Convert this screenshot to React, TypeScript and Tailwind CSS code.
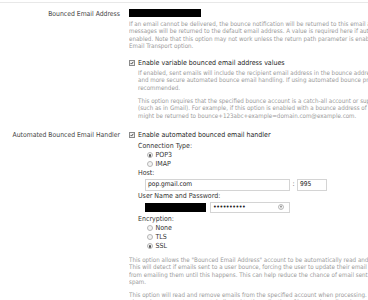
import React from "react";

const desc = "text-[6.2px] leading-[7.3px] text-[#9a9a9a]";

function Check() {
  return (
    <span className="mt-[1px] flex h-[6px] w-[6px] shrink-0 items-center justify-center border border-[#8a8a8a] bg-[#f2f2f2]">
      <svg viewBox="0 0 6 6" className="h-[6px] w-[6px]">
        <path d="M1 3.2 L2.4 4.6 L5 1.2" fill="none" stroke="#222" strokeWidth="1.2" />
      </svg>
    </span>
  );
}

function Radio({ on, label }: { on?: boolean; label: string }) {
  return (
    <div className="flex h-[9px] items-center gap-[2.5px] pl-[9px]">
      <span className="flex h-[6px] w-[6px] items-center justify-center rounded-full border border-[#b5b5b5] bg-[#f4f4f4]">
        {on && <span className="h-[2.5px] w-[2.5px] rounded-full bg-[#555]" />}
      </span>
      <span className="text-[7px] text-[#333]">{label}</span>
    </div>
  );
}

export default function App() {
  return (
    <div className="h-[300px] w-[368px] overflow-hidden bg-white font-['DejaVu_Sans_Condensed','DejaVu_Sans',sans-serif]">
      <div className="h-[3px] border-b border-[#e8e8e8]" />
      <div className="grid grid-cols-[120px_1fr] gap-x-[9px] overflow-hidden pt-[6px]">
        {/* Bounced Email Address */}
        <div className="pt-[1px] text-right text-[6.8px] leading-[9px] text-[#444]">Bounced Email Address</div>
        <div className="min-w-0 overflow-hidden">
          <div className="h-[8px] w-[72px] bg-black" />
          <div className={`${desc} mt-[3px] whitespace-nowrap`}>
            <div>If an email cannot be delivered, the bounce notification will be returned to this email address.</div>
            <div>messages will be returned to the default email address. A value is required here if automated</div>
            <div>enabled. Note that this option may not work unless the return path parameter is enabled</div>
            <div>Email Transport option.</div>
          </div>
          <div className="mt-[10px] flex items-start gap-[3px]">
            <Check />
            <span className="text-[7px] leading-[9px] text-[#222]">Enable variable bounced email address values</span>
          </div>
          <div className={`${desc} ml-[9px] mt-[1px] whitespace-nowrap`}>
            <div>If enabled, sent emails will include the recipient email address in the bounce address.</div>
            <div>and more secure automated bounce email handling. If using automated bounce processing,</div>
            <div>recommended.</div>
            <div className="h-[6px]" />
            <div>This option requires that the specified bounce account is a catch-all account or supports</div>
            <div>(such as in Gmail). For example, if this option is enabled with a bounce address of bounce@</div>
            <div>might be returned to bounce+123abc+example=domain.com@example.com.</div>
          </div>
        </div>

        {/* Automated Bounced Email Handler */}
        <div className="pt-[12px] text-right text-[6.8px] leading-[9px] text-[#444]">Automated Bounced Email Handler</div>
        <div className="min-w-0 overflow-hidden pt-[12px]">
          <div className="flex items-start gap-[3px]">
            <Check />
            <span className="text-[7px] leading-[9px] text-[#222]">Enable automated bounced email handler</span>
          </div>
          <div className="ml-[9px] text-[7px] leading-[9px] text-[#333]">
            <div className="mt-[2px]">Connection Type:</div>
            <Radio on label="POP3" />
            <Radio label="IMAP" />
            <div>Host:</div>
            <div className="mt-[1px] flex items-center pl-[7px]">
              <div className="flex h-[12px] w-[145px] items-center border border-[#d4d4d4] px-[2px] text-[6.6px] text-[#222]">pop.gmail.com</div>
              <span className="w-[7px] text-center text-[#444]">:</span>
              <div className="flex h-[12px] w-[30px] items-center border border-[#d4d4d4] px-[2px] text-[6.6px] text-[#222]">995</div>
            </div>
            <div className="mt-[1px]">User Name and Password:</div>
            <div className="mt-[1px] flex items-center gap-[4px] pl-[7px]">
              <div className="h-[9px] w-[61px] bg-black" />
              <div className="flex h-[11px] w-[80px] items-center justify-between border border-[#d4d4d4] px-[2px]">
                <span className="text-[7px] leading-none tracking-[-0.5px] text-[#222]">••••••••••</span>
                <svg viewBox="0 0 8 8" className="mr-[3px] h-[6px] w-[6px]">
                  <circle cx="4" cy="4" r="3.3" fill="none" stroke="#888" strokeWidth="0.8" />
                  <circle cx="4" cy="3.2" r="1.2" fill="#888" />
                  <path d="M4 4.2 V6" stroke="#888" strokeWidth="0.8" />
                </svg>
              </div>
            </div>
            <div className="mt-[2px]">Encryption:</div>
            <Radio label="None" />
            <Radio label="TLS" />
            <Radio on label="SSL" />
          </div>
          <div className={`${desc} mt-[5px] whitespace-nowrap`}>
            <div>This option allows the "Bounced Email Address" account to be automatically read and processed</div>
            <div>This will detect if emails sent to a user bounce, forcing the user to update their email address</div>
            <div>from emailing them until this happens. This can help reduce the chance of email sent from</div>
            <div>spam.</div>
            <div className="h-[6px]" />
            <div>This option will read and remove emails from the specified account when processing. It A</div>
            <div>always be a separate account dedicated to the collection of bounced emails only.</div>
          </div>
        </div>
      </div>
    </div>
  );
}
